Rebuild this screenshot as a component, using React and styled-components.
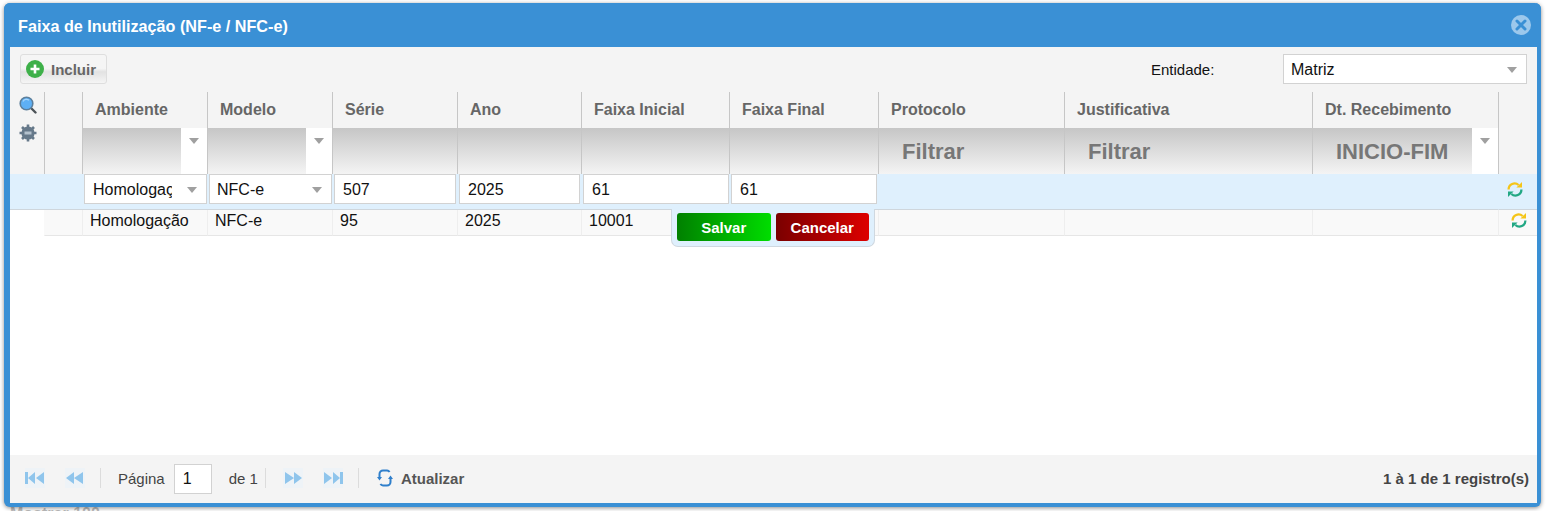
import React from "react";
import styled, { createGlobalStyle, css } from "styled-components";

const GlobalStyle = createGlobalStyle`
  html, body {
    margin: 0;
    height: 511px;
    overflow: hidden;
    background: #fff;
    font-family: "Liberation Sans", Arial, sans-serif;
  }
  * { box-sizing: border-box; }
`;

const COLUMNS = "34px 38px 125px 125px 125px 124px 148px 149px 186px 248px 186px 39px";

const Page = styled.div`
  position: relative;
  height: 511px;
  padding: 3px 6px 4px 4px;
`;

const BackdropText = styled.div`
  position: absolute;
  left: 10px;
  top: 505px;
  font-size: 16px;
  font-weight: bold;
  color: #bdbdbd;
`;

const Modal = styled.div`
  position: relative;
  z-index: 1;
  height: 504px;
  display: flex;
  flex-direction: column;
  background: #fff;
  border: solid #3a90d5;
  border-width: 0 4px 4px 6px;
  border-radius: 6px;
  box-shadow: 0 1px 4px rgba(0, 0, 0, 0.45);
`;

const TitleBar = styled.div`
  flex: 0 0 44px;
  margin: 0 -4px 0 -6px;
  padding: 0 10px 0 14px;
  display: flex;
  align-items: center;
  justify-content: space-between;
  background: #3a90d5;
  border-radius: 6px 6px 0 0;
  color: #fff;
  font-size: 16.2px;
  font-weight: bold;
`;

const TitleText = styled.span`
  margin-top: 2px;
`;

const Toolbar = styled.div`
  flex: 0 0 45px;
  padding: 7px 10px 8px 10px;
  display: flex;
  align-items: stretch;
  background: #f4f4f4;
`;

const AddButton = styled.button`
  width: 87px;
  padding: 0 0 0 5px;
  display: flex;
  align-items: center;
  gap: 7px;
  border: 1px solid #dedede;
  border-radius: 3px;
  background: linear-gradient(#f5f5f5 0%, #f5f5f5 48%, #e2e2e2 60%, #f5f5f5 100%);
  color: #666;
  font: bold 15px "Liberation Sans", Arial, sans-serif;
`;

const EntityGroup = styled.div`
  margin-left: auto;
  display: flex;
  align-items: center;
  color: #111;
  font-size: 15px;
`;

const EntityLabel = styled.span`
  width: 132px;
`;

const Arrow = styled.span`
  width: 0;
  height: 0;
  border-left: 5.5px solid transparent;
  border-right: 5.5px solid transparent;
  border-top: 6px solid #a0a0a0;
`;

const SelectBox = styled.div`
  display: flex;
  align-items: center;
  justify-content: space-between;
  padding: 1px 9px 0 ${(p) => p.$inset || 8}px;
  background: #fff;
  border: 1px solid #d2d2d2;
  color: #111;
  font-size: 16px;
  ${(p) =>
    p.$wide &&
    css`
      width: 244px;
      height: 30px;
      padding: 1px 9px 0 7px;
    `}
`;

const SelectValue = styled.span`
  overflow: hidden;
  white-space: nowrap;
  flex: 1;
  min-width: 0;
  max-width: ${(p) => p.$max || "none"};
`;

const Grid = styled.div`
  display: grid;
  grid-template-columns: ${COLUMNS};
`;

const HeaderCell = styled.div`
  height: 36px;
  padding: 0 0 1px 12px;
  display: flex;
  align-items: center;
  background: #f4f4f4;
  border-left: 1px solid #c6c6c6;
  color: #666;
  font-size: 16px;
  font-weight: bold;
  white-space: nowrap;
`;

const Rail = styled.div`
  grid-row: span 2;
  padding: 4px 0 0 9px;
  display: flex;
  flex-direction: column;
  align-items: flex-start;
  gap: 10px;
  background: #f4f4f4;
`;

const RailBlank = styled.div`
  grid-row: span 2;
  background: #f4f4f4;
  border-left: 1px solid #c6c6c6;
`;

const FilterCell = styled.div`
  height: 46px;
  display: flex;
  align-items: stretch;
  background: #f4f4f4;
  border-left: 1px solid #c6c6c6;
`;

const FilterFace = styled.div`
  flex: 1;
  padding: 2px 0 0 23px;
  display: flex;
  align-items: center;
  background: linear-gradient(#c6c6c6, #f4f4f4);
  color: #777;
  font-size: 22px;
  font-weight: bold;
  white-space: nowrap;
`;

const FilterToggle = styled.div`
  flex: 0 0 26px;
  padding-top: 10px;
  display: flex;
  justify-content: center;
  background: #fff;
`;

const EditCell = styled.div`
  height: 36px;
  padding: 0 0 5px 2px;
  background: #dff0fd;
  border-bottom: 1px solid #cfd6dc;
  display: flex;
  align-items: stretch;
  & > * {
    flex: 1;
    min-width: 0;
  }
`;

const EditInput = styled.input`
  padding: 1px 0 0 8px;
  margin-right: ${(p) => p.$gap ?? 1}px;
  background: #fff;
  border: 1px solid #d2d2d2;
  border-radius: 0;
  color: #111;
  font: 16px "Liberation Sans", Arial, sans-serif;
  outline: none;
`;

const DataCell = styled.div`
  height: 26px;
  padding: 2px 0 0 7px;
  background: ${(p) => (p.$blank ? "#fff" : "#f9f9f9")};
  border-left: 1px solid ${(p) => (p.$blank || p.$first ? "transparent" : "#eeeeee")};
  border-bottom: 1px solid ${(p) => (p.$blank ? "#fff" : "#e6e6e6")};
  color: #111;
  font-size: 16px;
  white-space: nowrap;
`;

const IconSlot = styled.div`
  padding: ${(p) => (p.$data ? "2px 0 0 12px" : "7px 0 0 8px")};
  display: flex;
  align-items: flex-start;
  background: ${(p) => (p.$data ? "#f9f9f9" : "#dff0fd")};
  border-left: 1px solid ${(p) => (p.$data ? "#eeeeee" : "transparent")};
  border-bottom: 1px solid ${(p) => (p.$data ? "#e6e6e6" : "#cfd6dc")};
`;

const GridBody = styled.div`
  flex: 1;
`;

const RowActions = styled.div`
  position: absolute;
  left: 661px;
  top: 206px;
  width: 204px;
  height: 38px;
  padding: 4px 5px 0 5px;
  display: flex;
  gap: 5px;
  align-items: flex-start;
  background: #dff0fd;
  border: 1px solid #cfd8e0;
  border-top: 0;
  border-radius: 0 0 7px 7px;
  z-index: 2;
`;

const ActionButton = styled.button`
  flex: 1;
  height: 28px;
  padding: 0;
  border: 0;
  border-radius: 3px;
  background: ${(p) =>
    p.$kind === "save"
      ? "linear-gradient(to right, #008000, #00dd00)"
      : "linear-gradient(to right, #7a0000, #dd0000)"};
  color: #fff;
  font: bold 15px "Liberation Sans", Arial, sans-serif;
`;

const Pager = styled.div`
  flex: 0 0 48px;
  padding: 0 8px 2px 15px;
  display: flex;
  align-items: center;
  background: #f4f4f4;
  color: #444;
  font-size: 15px;
`;

const PagerButton = styled.span`
  width: 20px;
  height: 20px;
  margin-right: ${(p) => p.$gap || 0}px;
  display: flex;
  align-items: center;
  justify-content: center;
  background: #eef3f7;
`;

const PagerDivider = styled.span`
  width: 1px;
  height: 20px;
  margin: ${(p) => p.$margin};
  background: #dcdcdc;
`;

const PageInput = styled.input`
  width: 38px;
  height: 30px;
  margin: 2px 17px 0 9px;
  padding: 0 0 0 8px;
  background: #fff;
  border: 1px solid #d2d2d2;
  border-radius: 0;
  color: #111;
  font: 16px "Liberation Sans", Arial, sans-serif;
  outline: none;
`;

const RefreshLink = styled.span`
  display: flex;
  align-items: center;
  gap: 8px;
  color: #555;
  font-size: 15px;
  font-weight: bold;
`;

const PagerSummary = styled.span`
  margin-left: auto;
  color: #444;
  font-size: 15px;
  font-weight: bold;
`;

const CloseIcon = () => (
  <svg width="20" height="20" viewBox="0 0 20 20">
    <circle cx="10" cy="10" r="10" fill="#9cc8ec" />
    <path d="M6 6l8 8M14 6l-8 8" stroke="#3a90d5" strokeWidth="3" strokeLinecap="round" />
  </svg>
);

const PlusIcon = () => (
  <svg width="18" height="18" viewBox="0 0 18 18">
    <circle cx="9" cy="9" r="9" fill="#3eb049" />
    <path d="M9 4.5v9M4.5 9h9" stroke="#fff" strokeWidth="2.6" />
  </svg>
);

const SearchIcon = () => (
  <svg width="18" height="18" viewBox="0 0 18 18">
    <path d="M11.5 11.5L16.5 16.5" stroke="#4d5358" strokeWidth="2.4" strokeLinecap="round" />
    <circle cx="7.5" cy="7.5" r="6.3" fill="#5eb0f5" stroke="#5c7f9c" strokeWidth="1.6" />
    <path d="M4 5.5a4 4 0 0 1 6-1.3" stroke="#a6d5fb" strokeWidth="1.2" fill="none" />
  </svg>
);

const GearIcon = () => (
  <svg width="18" height="18" viewBox="0 0 18 18">
    <g stroke="#66798a" strokeWidth="2.6">
      <path d="M9 0.5v17M0.5 9h17M3 3l12 12M15 3L3 15" />
    </g>
    <circle cx="9" cy="9" r="6.6" fill="#66798a" />
    <rect x="5.5" y="7.5" width="7" height="3" fill="#b4c2cd" />
  </svg>
);

const SyncIcon = () => (
  <svg width="16" height="17" viewBox="0 0 16 17" fill="none" strokeWidth="2.3">
    <path d="M1.6 8.5A6 6 0 0 1 11.6 4" stroke="#f5c518" />
    <path d="M15 1v5.6H9.4z" fill="#f5c518" />
    <path d="M14.4 8.5A6 6 0 0 1 4.4 13" stroke="#22a884" />
    <path d="M1 16v-5.6h5.6z" fill="#22a884" />
  </svg>
);

const BigRefreshIcon = () => (
  <svg width="16" height="18" viewBox="0 0 16 18" fill="none">
    <path d="M2.5 8V5A3.5 3.5 0 0 1 6 1.5h4A3.5 3.5 0 0 1 12.6 3" stroke="#2f7fcb" strokeWidth="2" />
    <path d="M13.5 10v3a3.5 3.5 0 0 1-3.5 3.5H6A3.5 3.5 0 0 1 3.4 15" stroke="#2f7fcb" strokeWidth="2" />
    <path d="M0 8h5l-2.5 3.4zM11 10h5L13.5 6.6z" fill="#2f7fcb" />
  </svg>
);

const PagerGlyph = ({ flip, edge }) => (
  <svg
    width="20"
    height="12"
    viewBox="0 0 20 12"
    style={flip ? { transform: "scaleX(-1)" } : undefined}
    fill="#8fc5ec"
  >
    {edge && <rect x="0" y="0" width="3" height="12" />}
    <path d={edge ? "M3 6l7-6v12zM11 6l8-6v12z" : "M1 6l8-6v12zM9 6l9-6v12z"} />
  </svg>
);

const headers = [
  "Ambiente",
  "Modelo",
  "Série",
  "Ano",
  "Faixa Inicial",
  "Faixa Final",
  "Protocolo",
  "Justificativa",
  "Dt. Recebimento",
];

const filters = [
  { toggle: true },
  { toggle: true },
  {},
  {},
  {},
  {},
  { label: "Filtrar" },
  { label: "Filtrar" },
  { label: "INICIO-FIM", toggle: true },
];

const dataRow = ["Homologação", "NFC-e", "95", "2025", "10001", "", "", "", ""];

export default function App() {
  return (
    <Page>
      <GlobalStyle />
      <BackdropText>Mostrar 100</BackdropText>
      <Modal>
        <TitleBar>
          <TitleText>Faixa de Inutilização (NF-e / NFC-e)</TitleText>
          <CloseIcon />
        </TitleBar>

        <Toolbar>
          <AddButton>
            <PlusIcon />
            Incluir
          </AddButton>
          <EntityGroup>
            <EntityLabel>Entidade:</EntityLabel>
            <SelectBox $wide>
              <SelectValue>Matriz</SelectValue>
              <Arrow />
            </SelectBox>
          </EntityGroup>
        </Toolbar>

        <Grid>
          <Rail>
            <SearchIcon />
            <GearIcon />
          </Rail>
          <RailBlank />
          {headers.map((h) => (
            <HeaderCell key={h}>{h}</HeaderCell>
          ))}
          <HeaderCell />
          {filters.map((f, i) => (
            <FilterCell key={i}>
              <FilterFace>{f.label}</FilterFace>
              {f.toggle && (
                <FilterToggle>
                  <Arrow />
                </FilterToggle>
              )}
            </FilterCell>
          ))}
          <FilterCell />

          <EditCell />
          <EditCell />
          <EditCell>
            <SelectBox>
              <SelectValue $max="79px">Homologação</SelectValue>
              <Arrow />
            </SelectBox>
          </EditCell>
          <EditCell>
            <SelectBox $inset={7}>
              <SelectValue>NFC-e</SelectValue>
              <Arrow />
            </SelectBox>
          </EditCell>
          <EditCell>
            <EditInput readOnly defaultValue="507" />
          </EditCell>
          <EditCell>
            <EditInput readOnly defaultValue="2025" />
          </EditCell>
          <EditCell>
            <EditInput readOnly defaultValue="61" $gap={0} />
          </EditCell>
          <EditCell>
            <EditInput readOnly defaultValue="61" />
          </EditCell>
          <EditCell />
          <EditCell />
          <EditCell />
          <IconSlot>
            <SyncIcon />
          </IconSlot>

          <DataCell $blank />
          <DataCell $first />
          {dataRow.map((v, i) => (
            <DataCell key={i}>{v}</DataCell>
          ))}
          <IconSlot $data>
            <SyncIcon />
          </IconSlot>
        </Grid>

        <GridBody />

        <RowActions>
          <ActionButton $kind="save">Salvar</ActionButton>
          <ActionButton $kind="cancel">Cancelar</ActionButton>
        </RowActions>

        <Pager>
          <PagerButton $gap={20}>
            <PagerGlyph edge />
          </PagerButton>
          <PagerButton>
            <PagerGlyph />
          </PagerButton>
          <PagerDivider $margin="0 17px 0 15px" />
          <span>Página</span>
          <PageInput readOnly defaultValue="1" />
          <span>de 1</span>
          <PagerDivider $margin="0 17px 0 7px" />
          <PagerButton $gap={20}>
            <PagerGlyph flip />
          </PagerButton>
          <PagerButton>
            <PagerGlyph flip edge />
          </PagerButton>
          <PagerDivider $margin="0 18px 0 15px" />
          <RefreshLink>
            <BigRefreshIcon />
            Atualizar
          </RefreshLink>
          <PagerSummary>1 à 1 de 1 registro(s)</PagerSummary>
        </Pager>
      </Modal>
    </Page>
  );
}
